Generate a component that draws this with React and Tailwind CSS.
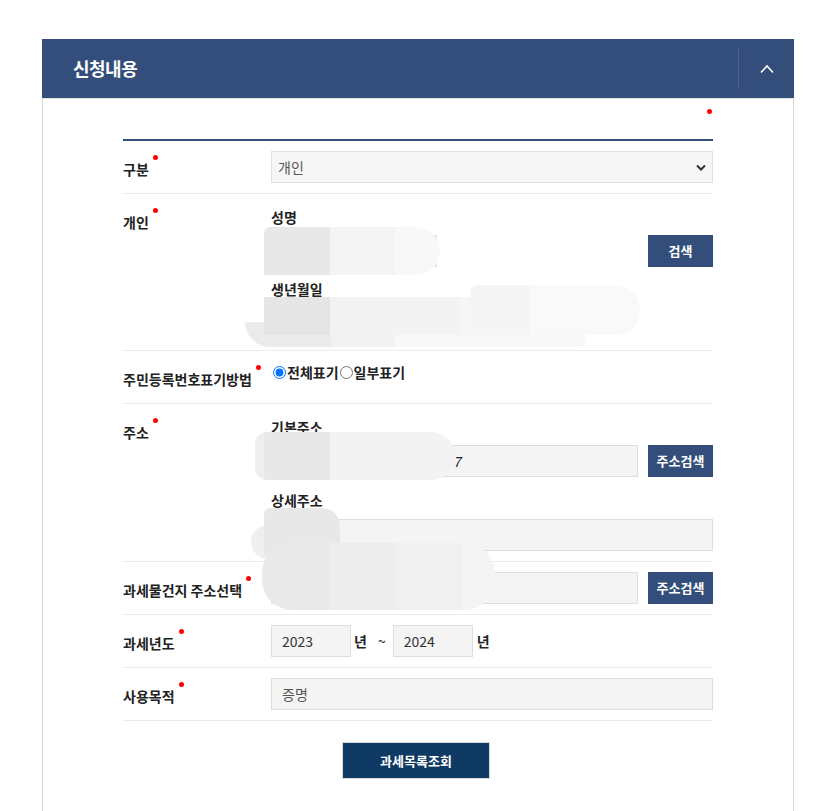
import React from "react";

const Dot = ({ cls = "" }) => (
  <span className={"inline-block w-[5px] h-[5px] rounded-full bg-[#ff0000] align-top " + cls} />
);

const Label = ({ children }) => (
  <div className="pt-[18px] text-[14px] leading-[20px] font-bold text-[#222] whitespace-nowrap">
    {children}
    <Dot cls="ml-[4px] mt-[-4px]" />
  </div>
);

const Sub = ({ children, cls = "" }) => (
  <div className={"text-[14px] leading-[20px] font-bold text-[#222] " + cls}>{children}</div>
);

const Btn = ({ children }) => (
  <div className="w-[65px] h-[32px] shrink-0 bg-[#334e7a] text-white text-[13px] font-bold flex items-center justify-center">
    {children}
  </div>
);

const Input = ({ children, cls = "" }) => (
  <div
    className={
      "h-[32px] bg-[#f4f4f4] border border-[#dddddd] flex items-center px-[10px] text-[14px] text-[#333] " + cls
    }
  >
    {children}
  </div>
);

export default function App() {
  return (
    <div
      className="relative w-[840px] min-h-[811px] bg-white pt-[39px] overflow-hidden"
      style={{ fontFamily: '"Noto Sans CJK KR", "Noto Sans", sans-serif' }}
    >
      <div className="ml-[42px] w-[752px]">
        {/* header */}
        <div className="h-[59px] bg-[#334e7a] flex items-center">
          <div className="flex-1 pl-[31px] text-white text-[18px] font-bold tracking-[-0.5px]">신청내용</div>
          <div className="w-px h-[40px] bg-[#4b6491]" />
          <div className="w-[55px] flex items-center justify-center">
            <svg width="16" height="10" viewBox="0 0 16 10" fill="none">
              <path d="M2 8.5 L8 2 L14 8.5" stroke="white" strokeWidth="1.6" />
            </svg>
          </div>
        </div>
        {/* body */}
        <div className="border-x border-[#d9d9d9] border-t border-t-[#e3e3e3] px-[80px] pb-[40px]">
          <div className="flex justify-end pt-[10px] h-[40px]">
            <Dot cls="mr-[1px]" />
          </div>
          <div className="h-[2px] bg-[#334e7a]" />

          {/* 구분 */}
          <div className="grid grid-cols-[148px_1fr] border-b border-[#ebebeb] pb-[10px]">
            <Label>구분</Label>
            <div className="pt-[10px]">
              <div className="h-[32px] bg-[#f6f6f6] border border-[#e0e0e0] flex items-center justify-between pl-[6px] pr-[6px] text-[14px] text-[#555]">
                <span>개인</span>
                <svg width="10" height="7" viewBox="0 0 10 7" fill="none">
                  <path d="M1 1.5 L5 5.5 L9 1.5" stroke="#333" strokeWidth="2" />
                </svg>
              </div>
            </div>
          </div>

          {/* 개인 */}
          <div className="grid grid-cols-[148px_1fr] border-b border-[#ebebeb] pb-[12px]">
            <Label>개인</Label>
            <div className="pt-[13px]">
              <Sub>성명</Sub>
              <div className="mt-[8px] flex justify-between">
                <Input cls="w-[166px]" />
                <Btn>검색</Btn>
              </div>
              <Sub cls="mt-[12px]">생년월일</Sub>
              <Input cls="mt-[7px] w-[305px]" />
            </div>
          </div>

          {/* 주민등록번호표기방법 */}
          <div className="grid grid-cols-[148px_1fr] border-b border-[#ebebeb] pb-[14px]">
            <Label>주민등록번호표기방법</Label>
            <div className="pt-[6px] flex items-center h-[36px] text-[14px] font-bold text-[#222]">
              <input type="radio" defaultChecked name="r" className="m-0 ml-[2px] mr-[1px] w-[13px] h-[13px]" />
              <span>전체표기</span>
              <input type="radio" name="r" className="m-0 ml-[1px] mr-[1px] w-[13px] h-[13px]" />
              <span>일부표기</span>
            </div>
          </div>

          {/* 주소 */}
          <div className="grid grid-cols-[148px_1fr] border-b border-[#ebebeb] pb-[10px]">
            <Label>주소</Label>
            <div className="pt-[13px]">
              <Sub>기본주소</Sub>
              <div className="mt-[8px] flex justify-between">
                <Input cls="w-[367px] pl-[181px]">
                  <span className="italic text-[#223]">7</span>
                </Input>
                <Btn>주소검색</Btn>
              </div>
              <Sub cls="mt-[13px]">상세주소</Sub>
              <Input cls="mt-[9px] w-full" />
            </div>
          </div>

          {/* 과세물건지 */}
          <div className="grid grid-cols-[148px_1fr] border-b border-[#ebebeb] pb-[10px]">
            <Label>과세물건지 주소선택</Label>
            <div className="pt-[10px] flex justify-between">
              <Input cls="w-[367px]" />
              <Btn>주소검색</Btn>
            </div>
          </div>

          {/* 과세년도 */}
          <div className="grid grid-cols-[148px_1fr] border-b border-[#ebebeb] pb-[10px]">
            <Label>과세년도</Label>
            <div className="pt-[10px] flex items-center text-[14px] font-bold text-[#222]">
              <Input cls="w-[80px] font-normal">2023</Input>
              <span className="ml-[3px]">년</span>
              <span className="ml-[11px] font-normal">~</span>
              <Input cls="ml-[7px] w-[80px] font-normal">2024</Input>
              <span className="ml-[4px]">년</span>
            </div>
          </div>

          {/* 사용목적 */}
          <div className="grid grid-cols-[148px_1fr] border-b border-[#ebebeb] pb-[10px]">
            <Label>사용목적</Label>
            <div className="pt-[10px]">
              <Input cls="w-full text-[#555]">증명</Input>
            </div>
          </div>

          <div className="flex justify-center pt-[21px] pr-[4px]">
            <div className="w-[148px] h-[37px] bg-[#0f3a63] border border-[#d9d9d9] text-white text-[13px] font-bold flex items-center justify-center">
              과세목록조회
            </div>
          </div>
        </div>
      </div>

      {/* privacy masks */}
      <div className="absolute left-[264px] top-[227px] w-[176px] h-[48px] rounded-r-[24px] rounded-tl-[6px] bg-[linear-gradient(90deg,#e8e8e8_0,#e8e8e8_66px,#f4f4f4_66px,#f4f4f4_131px,#f8f8f8_131px)]" />
      <div className="absolute left-[245px] top-[322px] w-[340px] h-[25px] rounded-bl-[25px] rounded-r-[6px] bg-[linear-gradient(90deg,#ebebeb_0,#ebebeb_86px,#f2f2f2_86px,#f2f2f2_150px,#f8f8f8_150px)]" />
      <div className="absolute left-[264px] top-[297px] w-[330px] h-[38px] bg-[linear-gradient(90deg,#e5e5e5_0,#e5e5e5_66px,#f3f3f3_66px,#f3f3f3_196px,#f6f6f6_196px)]" />
      <div className="absolute left-[470px] top-[285px] w-[170px] h-[50px] rounded-[25px] rounded-l-[8px] bg-[linear-gradient(90deg,#f5f5f5_0,#f5f5f5_60px,#f9f9f9_60px)]" />
      <div className="absolute left-[255px] top-[432px] w-[200px] h-[48px] rounded-r-[24px] rounded-l-[12px] bg-[linear-gradient(90deg,#eeeeee_0,#eeeeee_9px,#e8e8e8_9px,#e8e8e8_75px,#f3f3f3_75px)]" />
      <div className="absolute left-[251px] top-[525px] w-[90px] h-[34px] rounded-[20px] bg-[#efefef]" />
      <div className="absolute left-[264px] top-[508px] w-[76px] h-[50px] rounded-[18px] rounded-l-[6px] bg-[#e8e8e8]" />
      <div className="absolute left-[262px] top-[543px] w-[233px] h-[67px] rounded-[30px] bg-[linear-gradient(90deg,#e9e9e9_0,#e9e9e9_68px,#ededed_68px,#ededed_133px,#f0f0f0_133px,#f0f0f0_200px,#f4f4f4_200px)]" />
    </div>
  );
}
